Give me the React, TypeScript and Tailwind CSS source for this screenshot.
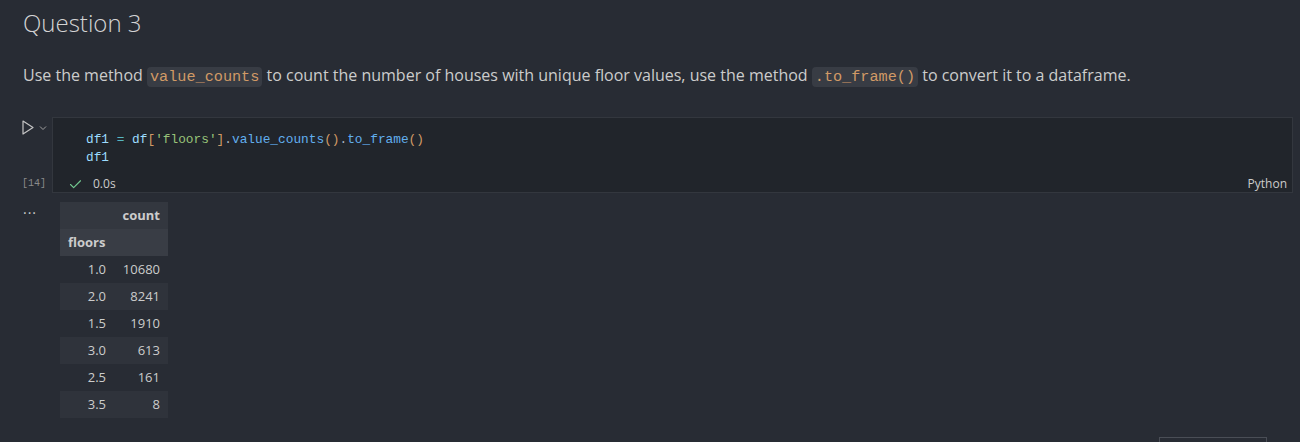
import { Check } from "lucide-react";

const rows: [string, string][] = [
  ["1.0", "10680"],
  ["2.0", "8241"],
  ["1.5", "1910"],
  ["3.0", "613"],
  ["2.5", "161"],
  ["3.5", "8"],
];

const ui = "font-['Open_Sans','Noto_Sans',sans-serif]";
const mono = "font-['Liberation_Mono','DejaVu_Sans_Mono',monospace]";

function InlineCode({ children }: { children: string }) {
  return (
    <code
      className={`${mono} rounded-[4px] bg-[#383c44] px-[3px] py-[1px] text-[15.2px] text-[#d19a66]`}
    >
      {children}
    </code>
  );
}

export default function App() {
  return (
    <div className={`${ui} min-h-[442px] overflow-hidden bg-[#282c34] text-[#cccccc]`}>
      {/* Markdown cell */}
      <div className="pl-[23px] pt-[6px]">
        <h2 className="text-[24px] font-light leading-[34px] text-[#d4d4d4]">Question 3</h2>
        <p className="mt-[24px] text-[16px] leading-[22px] text-[#cccccc]">
          Use the method <InlineCode>value_counts</InlineCode> to count the number of houses with
          unique floor values, use the method <InlineCode>.to_frame()</InlineCode> to convert it to
          a dataframe.
        </p>
      </div>

      {/* Code cell */}
      <div className="mt-[29px] flex pr-[7px]">
        <div className="flex w-[52px] shrink-0 flex-col justify-between pb-[2px] pl-[22px] pt-[3px]">
          <div className="flex items-center gap-[5px]">
            <svg width="12" height="15" viewBox="0 0 12 15" fill="none">
              <path d="M1 1 L11 7.5 L1 14 Z" stroke="#c5c5c5" strokeWidth="1.2" strokeLinejoin="round" />
            </svg>
            <svg width="8" height="6" viewBox="0 0 8 6" fill="none">
              <path d="M1 1.5 L4 4.5 L7 1.5" stroke="#a0a0a0" strokeWidth="1" />
            </svg>
          </div>
          <span className={`${mono} text-[10px] leading-[14px] text-[#8b8b8b]`}>[14]</span>
        </div>
        <div className="flex-1 border border-[#33373e] bg-[#21252b]">
          <pre className={`${mono} pl-[33px] pt-[13px] text-[12.8px] leading-[18px] text-[#abb2bf]`}>
            <span className="text-[#9cdcfe]">df1</span> <span className="text-[#56b6c2]">=</span>{" "}
            <span className="text-[#9cdcfe]">df</span>
            <span className="text-[#d19a66]">[</span>
            <span className="text-[#98c379]">'floors'</span>
            <span className="text-[#d19a66]">]</span>.
            <span className="text-[#61afef]">value_counts</span>
            <span className="text-[#d19a66]">()</span>.
            <span className="text-[#61afef]">to_frame</span>
            <span className="text-[#d19a66]">()</span>
            {"\n"}
            <span className="text-[#9cdcfe]">df1</span>
          </pre>
          <div className="mt-[9px] flex h-[16px] items-center pl-[15px] pr-[5px]">
            <Check className="h-[15px] w-[15px] text-[#73c991]" strokeWidth={1.8} />
            <span className="ml-[10px] text-[12px] leading-[16px] text-[#cccccc]">0.0s</span>
            <span className="ml-auto text-[12px] leading-[16px] text-[#cccccc]">Python</span>
          </div>
        </div>
      </div>

      {/* Output */}
      <div className="flex pt-[9px]">
        <div className="w-[60px] shrink-0 pl-[23px] text-[14px] leading-[14px] tracking-[1px] text-[#cccccc]">
          ...
        </div>
        <table className="border-collapse text-[13px] text-[#cccccc]">
          <thead>
            <tr className="h-[27px] bg-[#33373f]">
              <th className="w-[54px]" />
              <th className="w-[54px] pr-[8px] text-right font-bold">count</th>
            </tr>
            <tr className="h-[27px] bg-[#393d45]">
              <th className="pl-[8px] text-left font-bold">floors</th>
              <th />
            </tr>
          </thead>
          <tbody>
            {rows.map(([idx, count], i) => (
              <tr key={idx} className={`h-[27px] ${i % 2 === 1 ? "bg-[#2f333b]" : ""}`}>
                <td className="pr-[8px] text-right">{idx}</td>
                <td className="pr-[8px] text-right">{count}</td>
              </tr>
            ))}
          </tbody>
        </table>
      </div>

      <div className="ml-[1159px] mt-[19px] h-[10px] w-[108px] border border-[#4a4e56]" />
    </div>
  );
}
